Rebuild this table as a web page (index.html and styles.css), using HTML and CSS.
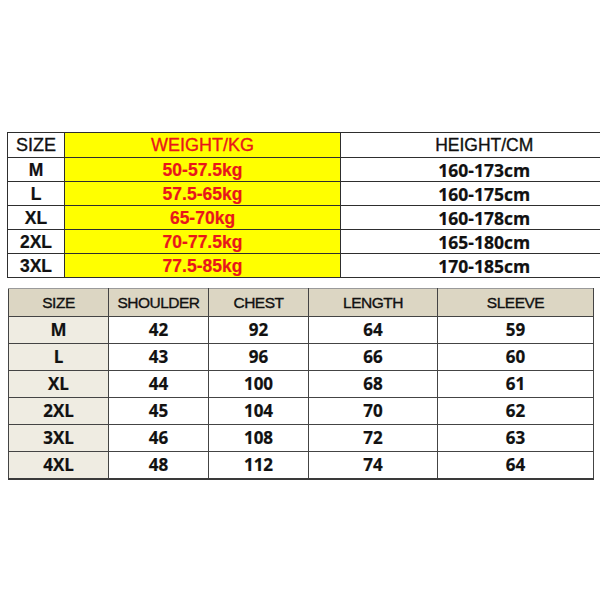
FILE: index.html
```html
<!DOCTYPE html>
<html>
<head>
<meta charset="utf-8">
<link rel="stylesheet" href="styles.css">
</head>
<body>
<div class="page">
  <table class="t1">
    <colgroup><col class="c1"><col class="c2"><col class="c3"></colgroup>
    <tr class="head"><td class="size">SIZE</td><td class="weight">WEIGHT/KG</td><td class="height">HEIGHT/CM</td></tr>
    <tr><td class="size b">M</td><td class="weight b">50-57.5kg</td><td class="height b">160-173cm</td></tr>
    <tr><td class="size b">L</td><td class="weight b">57.5-65kg</td><td class="height b">160-175cm</td></tr>
    <tr><td class="size b">XL</td><td class="weight b">65-70kg</td><td class="height b">160-178cm</td></tr>
    <tr><td class="size b">2XL</td><td class="weight b">70-77.5kg</td><td class="height b">165-180cm</td></tr>
    <tr><td class="size b">3XL</td><td class="weight b">77.5-85kg</td><td class="height b">170-185cm</td></tr>
  </table>

  <table class="t2">
    <colgroup><col class="d1"><col class="d2"><col class="d3"><col class="d4"><col class="d5"></colgroup>
    <tr class="head"><td>SIZE</td><td>SHOULDER</td><td>CHEST</td><td>LENGTH</td><td>SLEEVE</td></tr>
    <tr><td class="sz">M</td><td>42</td><td>92</td><td>64</td><td>59</td></tr>
    <tr><td class="sz">L</td><td>43</td><td>96</td><td>66</td><td>60</td></tr>
    <tr><td class="sz">XL</td><td>44</td><td>100</td><td>68</td><td>61</td></tr>
    <tr><td class="sz">2XL</td><td>45</td><td>104</td><td>70</td><td>62</td></tr>
    <tr><td class="sz">3XL</td><td>46</td><td>108</td><td>72</td><td>63</td></tr>
    <tr class="last"><td class="sz">4XL</td><td>48</td><td>112</td><td>74</td><td>64</td></tr>
  </table>
</div>
</body>
</html>
```

FILE: styles.css
```css
html, body {
  margin: 0;
  padding: 0;
  background: #ffffff;
}
.page {
  width: 600px;
  height: 600px;
  overflow: hidden;
  padding-top: 132px;
  box-sizing: border-box;
}
table {
  border-collapse: collapse;
  table-layout: fixed;
}
td {
  padding: 0;
  text-align: center;
  vertical-align: middle;
  color: #111;
}

/* Table 1 */
.t1 {
  margin-left: 7px;
  width: 620px;
}
.t1 .c1 { width: 57px; }
.t1 .c2 { width: 276px; }
.t1 .c3 { width: 287px; }
.t1 tr { height: 24px; }
.t1 tr.head { height: 25px; }
.t1 td {
  border-top: 1px solid #2e2e2e;
  border-bottom: 1px solid #2e2e2e;
  font-family: "Liberation Sans", Arial, sans-serif;
  font-size: 18px;
  line-height: 20px;
  -webkit-text-stroke: 0.35px currentColor;
}
.t1 td.size {
  border-left: 1px solid #2e2e2e;
  border-right: 1px solid #2e2e2e;
}
.t1 td.weight {
  background: #ffff00;
  color: #e8161b;
  border-right: 1px solid #2e2e2e;
}
.t1 td.height {
  font-size: 17.5px;
}
.t1 td.size.b {
  font-weight: 700;
  font-size: 17.5px;
  -webkit-text-stroke: 0.2px currentColor;
}
.t1 td.weight.b {
  font-weight: 700;
  font-size: 17.5px;
  -webkit-text-stroke: 0.2px currentColor;
}
.t1 td.height.b {
  font-family: "Open Sans", sans-serif;
  font-weight: 700;
  font-size: 17.5px;
  -webkit-text-stroke: 0.2px currentColor;
}

/* Table 2 */
.t2 {
  margin-left: 8px;
  margin-top: 10px;
  width: 585px;
}
.t2 .d1 { width: 100px; }
.t2 .d2 { width: 100px; }
.t2 .d3 { width: 100px; }
.t2 .d4 { width: 129px; }
.t2 .d5 { width: 156px; }
.t2 tr { height: 27px; }
.t2 tr.head { height: 28px; }
.t2 td {
  border: 1px solid #444;
  font-family: "Open Sans", sans-serif;
  font-weight: 700;
  font-size: 17px;
  line-height: 20px;
  -webkit-text-stroke: 0.2px currentColor;
}
.t2 tr.head td {
  background: #dcd6c3;
  font-family: "Liberation Sans", Arial, sans-serif;
  font-weight: 400;
  font-size: 15.5px;
  letter-spacing: -0.5px;
  -webkit-text-stroke: 0.35px currentColor;
  border-top: 1px solid #9a9a9a;
}
.t2 td.sz {
  background: #efece2;
}
.t2 tr.last td {
  border-bottom: 2px solid #3a3a3a;
}
```
